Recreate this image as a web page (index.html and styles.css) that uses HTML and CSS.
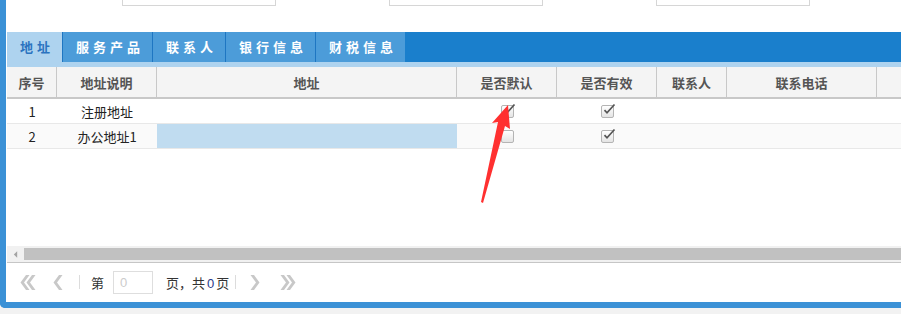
FILE: index.html
```html
<!DOCTYPE html>
<html>
<head>
<meta charset="utf-8">
<link rel="stylesheet" href="styles.css">
</head>
<body>
<div class="frame">
  <div class="topbar">
    <div class="inp"></div>
    <div class="inp"></div>
    <div class="inp"></div>
  </div>
  <div class="tabs">
    <div class="tab active">地址</div>
    <div class="tab">服务产品</div>
    <div class="tab">联系人</div>
    <div class="tab">银行信息</div>
    <div class="tab">财税信息</div>
  </div>
  <div class="strip"></div>
  <div class="gridwrap">
    <div class="row head">
      <div class="c">序号</div>
      <div class="c">地址说明</div>
      <div class="c">地址</div>
      <div class="c">是否默认</div>
      <div class="c">是否有效</div>
      <div class="c">联系人</div>
      <div class="c">联系电话</div>
      <div class="c last"></div>
    </div>
    <div class="row">
      <div class="c">1</div>
      <div class="c">注册地址</div>
      <div class="c"></div>
      <div class="c"><span class="cb"><svg viewBox="0 0 15 15" class="chk"><path d="M3.5 7.2 L6 9.8 L13.5 1.5"/></svg></span></div>
      <div class="c"><span class="cb"><svg viewBox="0 0 15 15" class="chk"><path d="M3.5 7.2 L6 9.8 L13.5 1.5"/></svg></span></div>
      <div class="c"></div>
      <div class="c"></div>
      <div class="c"></div>
    </div>
    <div class="row alt">
      <div class="c">2</div>
      <div class="c">办公地址1</div>
      <div class="c sel"></div>
      <div class="c"><span class="cb"></span></div>
      <div class="c"><span class="cb"><svg viewBox="0 0 15 15" class="chk"><path d="M3.5 7.2 L6 9.8 L13.5 1.5"/></svg></span></div>
      <div class="c"></div>
      <div class="c"></div>
      <div class="c"></div>
    </div>
    <div class="fill"></div>
  </div>
  <div class="hscroll">
    <div class="sarrow"><svg viewBox="0 0 6 8" class="tri"><path d="M5 0 L1 4 L5 8 Z"/></svg></div>
    <div class="thumb"></div>
  </div>
  <div class="pager">
    <svg class="ico first" viewBox="0 0 17 15"><path d="M7 0 H10.5 L5 7.5 L10.5 15 H7 L1.5 7.5 Z"/><path d="M13 0 H16.5 L11 7.5 L16.5 15 H13 L7.5 7.5 Z"/></svg>
    <svg class="ico prev" viewBox="0 0 10 15"><path d="M6 0 H9.5 L4 7.5 L9.5 15 H6 L0.5 7.5 Z"/></svg>
    <span class="sep"></span>
    <span class="lbl">第</span>
    <span class="pinput">0</span>
    <span class="lbl total">页，共<b class="num">0</b>页</span>
    <span class="sep sep2"></span>
    <svg class="ico next" viewBox="0 0 10 15"><path d="M4 0 H0.5 L6 7.5 L0.5 15 H4 L9.5 7.5 Z"/></svg>
    <svg class="ico last" viewBox="0 0 17 15"><path d="M4 0 H0.5 L6 7.5 L0.5 15 H4 L9.5 7.5 Z"/><path d="M10 0 H6.5 L12 7.5 L6.5 15 H10 L15.5 7.5 Z"/></svg>
  </div>
</div>
<div class="under"></div>
<svg class="annot" viewBox="0 0 901 314" width="901" height="314">
  <polygon points="508,105 510,129 505,126 483,203 481,202 498,122 492,123" fill="#ff3030"/>
</svg>
</body>
</html>
```

FILE: styles.css
```css
html, body {
  margin: 0;
  padding: 0;
  overflow: hidden;
  background: #ffffff;
}
body {
  width: 901px;
  height: 314px;
  position: relative;
  font-family: "Noto Sans CJK SC", "Noto Sans", sans-serif;
  font-size: 13px;
  color: #333;
}
.frame {
  width: 901px;
  height: 308px;
  box-sizing: border-box;
  border-left: 6px solid #3b91d6;
  border-bottom: 6px solid #3b91d6;
  border-bottom-left-radius: 5px;
  padding-left: 1px;
  display: flex;
  flex-direction: column;
  box-shadow: 0 2px 3px rgba(0,0,0,0.12);
}
.topbar {
  height: 32px;
  display: flex;
  align-items: flex-start;
  padding-left: 115px;
  gap: 113px;
  box-sizing: border-box;
}
.inp {
  width: 154px;
  height: 6px;
  box-sizing: border-box;
  border: 1px solid #d6d6d6;
  border-top: none;
}
.tabs {
  height: 30px;
  display: flex;
  background: #1a7fcc;
}
.tab {
  padding: 0 8px 0 13px;
  line-height: 30px;
  font-weight: bold;
  font-size: 13px;
  letter-spacing: 4px;
  color: #ffffff;
  background: #4c9cd9;
  border-left: 1px solid #1e76c2;
  white-space: nowrap;
}
.tab.active {
  background: #aed3ef;
  color: #2b73c0;
  border-left: none;
  padding-left: 13px;
  padding-right: 8px;
}
.strip {
  height: 5px;
  background: #aed3ef;
}
.gridwrap {
  height: 179px;
  display: flex;
  flex-direction: column;
}
.row {
  display: grid;
  grid-template-columns: 50px 100px 300px 100px 100px 70px 150px 1fr;
  height: 25px;
  box-sizing: border-box;
  border-bottom: 1px solid #e8e8e8;
}
.row .c {
  display: flex;
  align-items: center;
  justify-content: center;
  font-size: 13px;
  color: #222;
}
.row.head {
  height: 32px;
  background: #f4f4f4;
  border-bottom: 2px solid #c8c8c8;
}
.row.head .c {
  border-right: 1px solid #c8c8c8;
  font-weight: bold;
  color: #555;
}
.row.head .c.last {
  border-right: none;
}
.row.alt {
  background: #fafafa;
}
.row .c.sel {
  background: #c0dcf0;
}
.cb {
  width: 13px;
  height: 13px;
  box-sizing: border-box;
  border: 1px solid #b4b4b4;
  border-radius: 2px;
  background: linear-gradient(#ffffff, #e4e4e4);
  position: relative;
  margin-top: 1px;
}
.chk {
  position: absolute;
  left: -1px;
  top: -3px;
  width: 15px;
  height: 15px;
  overflow: visible;
}
.chk path {
  fill: none;
  stroke: #555;
  stroke-width: 1.7;
}
.fill {
  flex: 1;
}
.hscroll {
  height: 17px;
  display: flex;
  background: #f1f1f1;
  border-bottom: 1px solid #c6c6c6;
  box-sizing: border-box;
}
.sarrow {
  width: 17px;
  display: flex;
  align-items: center;
  justify-content: center;
}
.tri {
  width: 5px;
  height: 7px;
  fill: #a3a3a3;
}
.thumb {
  flex: 1;
  margin: 2px 0 2px 0;
  background: #c1c1c1;
}
.pager {
  height: 38px;
  display: flex;
  align-items: center;
  padding-left: 12px;
  box-sizing: border-box;
}
.ico {
  fill: #c8c8c8;
  height: 15px;
}
.ico.first { width: 17px; }
.ico.prev { width: 10px; margin-left: 17px; }
.sep {
  width: 1px;
  height: 14px;
  background: #dcdcdc;
  margin-left: 16px;
}
.lbl {
  margin-left: 11px;
  font-size: 13px;
  color: #333;
}
.pinput {
  margin-left: 9px;
  width: 40px;
  height: 23px;
  box-sizing: border-box;
  border: 1px solid #dedede;
  color: #cccccc;
  font-family: "Liberation Sans", sans-serif;
  font-size: 13px;
  line-height: 21px;
  padding-left: 6px;
}
.lbl.total {
  margin-left: 13px;
}
.num {
  font-weight: normal;
  font-family: "Liberation Sans", sans-serif;
  color: #2a3a8a;
  margin: 0 2px;
}
.sep2 {
  margin-left: 6px;
}
.ico.next { width: 10px; margin-left: 14px; }
.ico.last { width: 17px; margin-left: 20px; }
.under {
  height: 6px;
  background: #f2f2f2;
}
.annot {
  position: absolute;
  left: 0;
  top: 0;
  pointer-events: none;
}
```
